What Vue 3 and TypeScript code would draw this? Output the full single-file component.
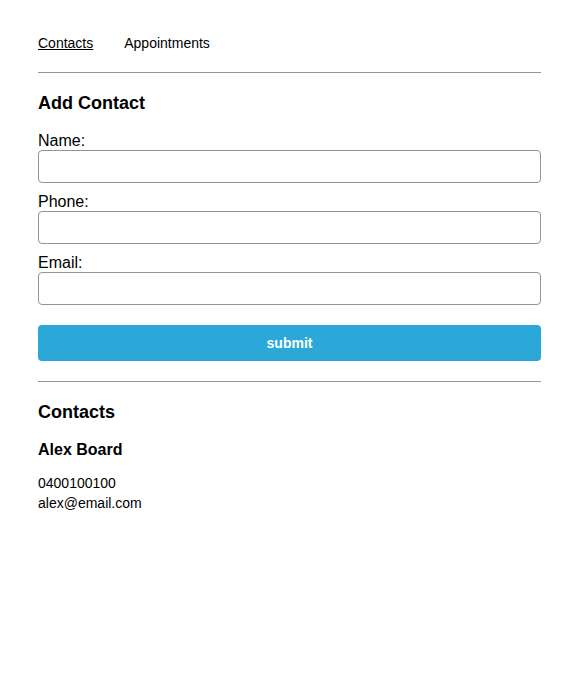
<script setup lang="ts">
import { reactive, ref } from 'vue'

interface Contact {
  name: string
  phone: string
  email: string
}

const contacts = ref<Contact[]>([
  { name: 'Alex Board', phone: '0400100100', email: 'alex@email.com' },
])
const form = reactive<Contact>({ name: '', phone: '', email: '' })

function addContact() {
  contacts.value.push({ ...form })
  form.name = ''
  form.phone = ''
  form.email = ''
}
</script>

<template>
  <div class="page">
    <nav class="nav">
      <a href="#contacts" class="active">Contacts</a>
      <a href="#appointments">Appointments</a>
    </nav>
    <main>
      <section class="block">
        <h2>Add Contact</h2>
        <form @submit.prevent="addContact">
          <div class="field">
            <label for="name">Name:</label>
            <input id="name" v-model="form.name" type="text" />
          </div>
          <div class="field">
            <label for="phone">Phone:</label>
            <input id="phone" v-model="form.phone" type="tel" />
          </div>
          <div class="field">
            <label for="email">Email:</label>
            <input id="email" v-model="form.email" type="email" />
          </div>
          <button type="submit">submit</button>
        </form>
      </section>
      <section class="block">
        <h2>Contacts</h2>
        <article v-for="(contact, index) in contacts" :key="index" class="contact">
          <h3>{{ contact.name }}</h3>
          <p>{{ contact.phone }}</p>
          <p>{{ contact.email }}</p>
        </article>
      </section>
    </main>
  </div>
</template>

<style>
body {
  background: #fff;
}
</style>

<style scoped>
.page {
  padding: 33px 29px 33px 38px;
  font-family: "Liberation Sans", Arial, sans-serif;
  font-size: 16px;
  line-height: 20px;
  color: #000;
}
.nav {
  display: flex;
  gap: 31px;
  padding-bottom: 19px;
  font-size: 14px;
}
.nav a {
  color: #000;
  text-decoration: none;
}
.nav .active {
  text-decoration: underline;
}
.block {
  padding: 20px 0;
  border-top: 1px solid #949494;
}
h2 {
  margin: 0;
  font-size: 18px;
  line-height: 20px;
}
form {
  display: flex;
  flex-direction: column;
  padding-top: 19px;
}
.field {
  display: flex;
  flex-direction: column;
  margin-bottom: 10px;
}
label {
  line-height: 18px;
}
input {
  box-sizing: border-box;
  width: 100%;
  height: 33px;
  padding: 0 8px;
  border: 1px solid #949494;
  border-radius: 4px;
  font: inherit;
}
button {
  height: 36px;
  margin-top: 10px;
  border: 0;
  border-radius: 4px;
  background: #2ba8d8;
  color: #fff;
  font: bold 14px "Liberation Sans", Arial, sans-serif;
}
.contact {
  padding-top: 18px;
  font-size: 14px;
}
h3 {
  margin: 0 0 13px;
  font-size: 16px;
  line-height: 20px;
}
p {
  margin: 0;
}
</style>
